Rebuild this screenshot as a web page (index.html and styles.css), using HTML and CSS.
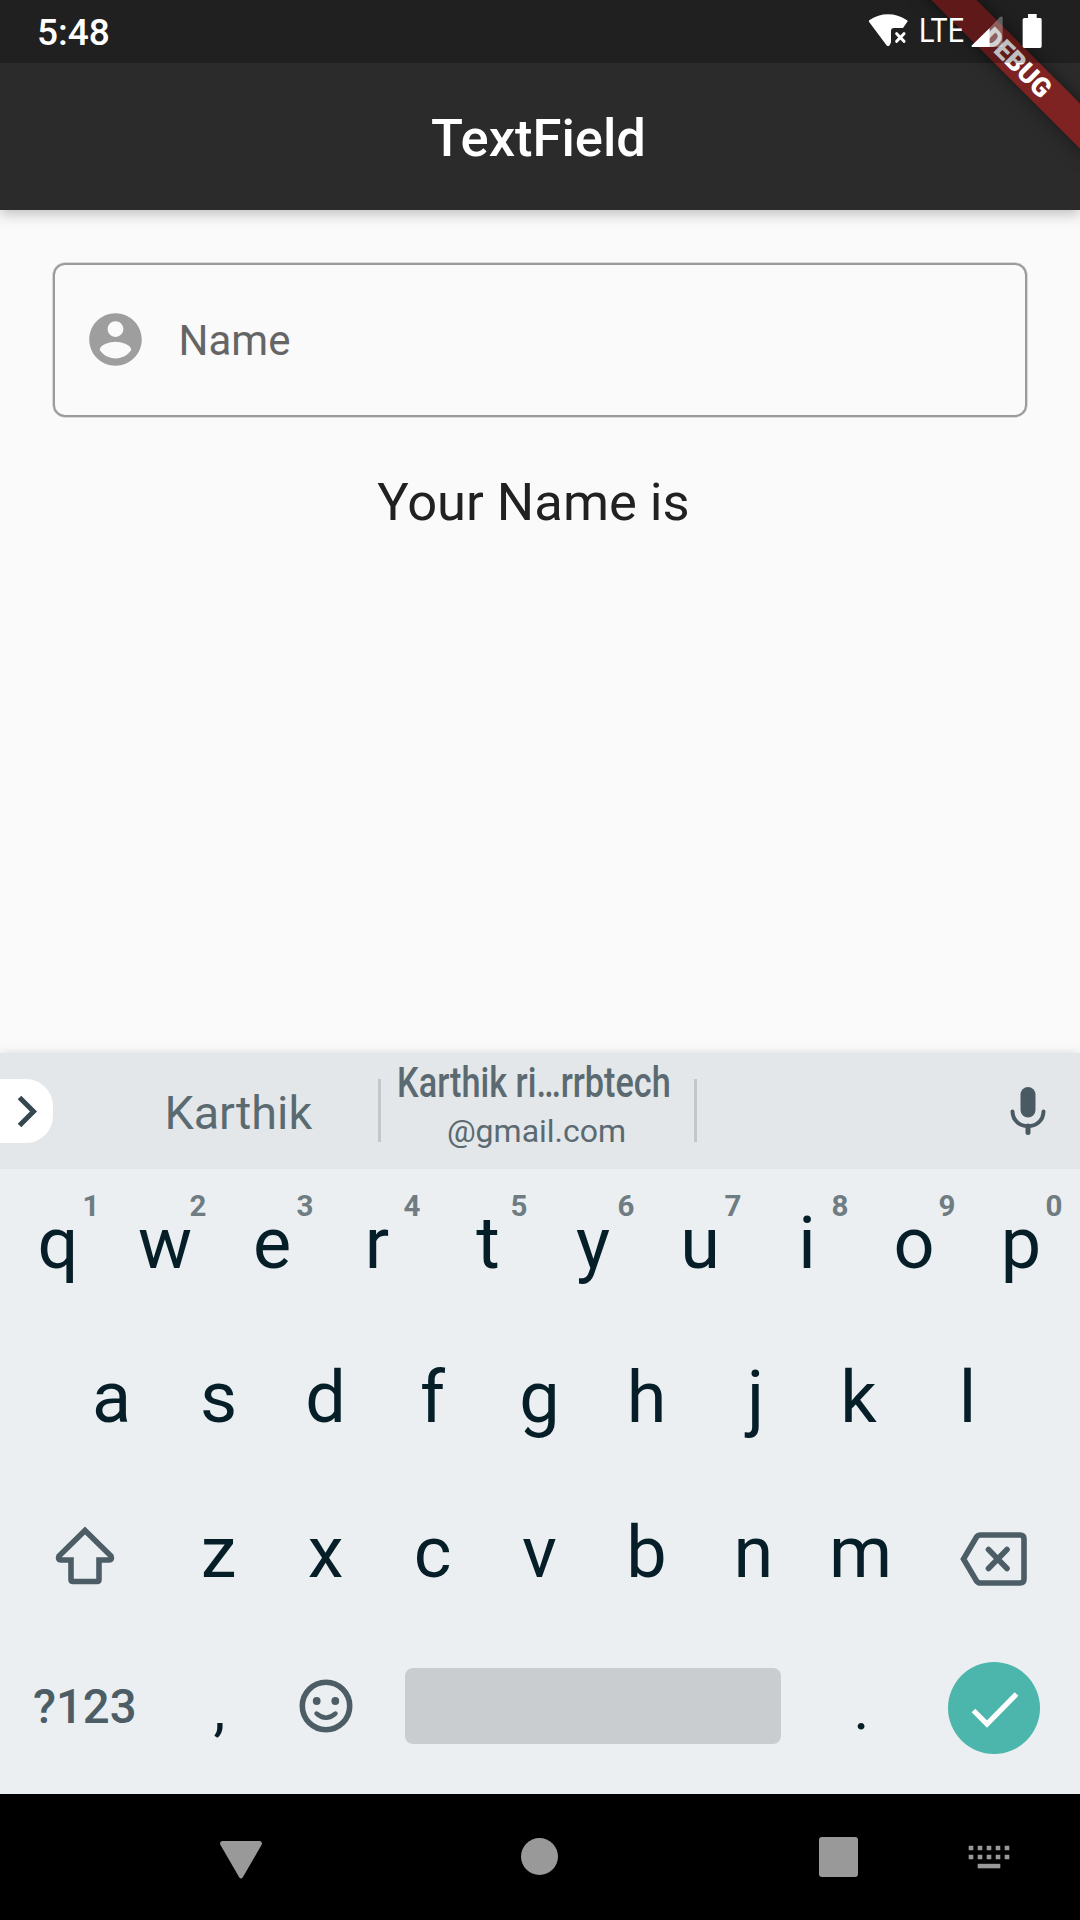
FILE: index.html
```html
<!DOCTYPE html>
<html lang="en">
<head>
<meta charset="utf-8">
<title>TextField</title>
<link rel="stylesheet" href="styles.css">
</head>
<body>
<div class="screen">
  <header class="appbar">
    <div class="debug-banner">DEBUG</div>
    <div class="statusbar">
      <span class="clock">5:48</span>
      <div class="indicators">
        <svg class="wifi" width="40" height="34" viewBox="0 0 120 102" fill="#fff"><path d="M4 31Q1 27 5 24Q30 7 60 7Q90 7 116 24Q121 27 117 31L105 48H78Q69 48 69 58V91L65 100Q60 105 55 99Z"/><path d="M86 65l22 23M108 65L86 88" fill="none" stroke="#fff" stroke-width="9" stroke-linecap="round"/></svg>
        <span class="lte">LTE</span>
        <svg class="signal" width="32" height="32" viewBox="0 0 96 96" fill="#fff"><path d="M56 36V93H5Q-1 92 3 88Z"/><path opacity=".3" d="M56 36L86 4Q93-1 95 5V93H56Z"/></svg>
        <svg class="battery" width="20" height="34" viewBox="0 0 60 102" fill="#fff"><path d="M18 0H44V12H55Q59 12 59 17V97Q59 102 54 102H7Q2 102 2 97V17Q2 12 7 12H18Z"/></svg>
      </div>
    </div>
    <h1 class="title">TextField</h1>
  </header>

  <main class="content">
    <label class="field">
      <svg class="avatar" width="63" height="63" viewBox="0 0 24 24"><path fill="#9e9e9e" d="M12 2C6.48 2 2 6.48 2 12s4.48 10 10 10 10-4.48 10-10S17.52 2 12 2zm0 3c1.66 0 3 1.34 3 3s-1.34 3-3 3-3-1.34-3-3 1.34-3 3-3zm0 14.2c-2.5 0-4.71-1.28-6-3.22.03-1.99 4-3.08 6-3.08 1.99 0 5.97 1.09 6 3.08-1.29 1.94-3.5 3.22-6 3.22z"/></svg>
      <span class="hint">Name</span>
    </label>
    <p class="result">Your Name is </p>
  </main>

  <section class="keyboard">
    <div class="suggestions">
      <div class="expand"><svg width="52" height="64" viewBox="0 0 52 64"><path d="M19.5 18.500L33.500 32.500L19.500 46.500" fill="none" stroke="#37474f" stroke-width="5"/></svg></div>
      <div class="suggestion first">Karthik</div>
      <div class="divider"></div>
      <div class="suggestion email"><b class="account">Karthik ri…rrbtech</b><span class="domain">@gmail.com</span></div>
      <div class="divider"></div>
      <svg class="mic" width="36" height="48" viewBox="0 0 36 48"><rect x="10.500" y="0" width="15" height="30.500" rx="7.500" fill="#4a5a62"/><path d="M2.500 24.500C3 44 33 44 33.500 24.500" fill="none" stroke="#4a5a62" stroke-width="4" stroke-linecap="round"/><path d="M18 39V45.500" stroke="#4a5a62" stroke-width="5" stroke-linecap="round"/></svg>
    </div>
    <div class="keys">
      <div class="row">
        <div class="key">q<sup class="alt">1</sup></div><div class="key">w<sup class="alt">2</sup></div><div class="key">e<sup class="alt">3</sup></div><div class="key lean-left">r<sup class="alt">4</sup></div><div class="key lean-right">t<sup class="alt">5</sup></div><div class="key">y<sup class="alt">6</sup></div><div class="key">u<sup class="alt">7</sup></div><div class="key">i<sup class="alt">8</sup></div><div class="key">o<sup class="alt">9</sup></div><div class="key">p<sup class="alt">0</sup></div>
      </div>
      <div class="row">
        <div class="key">a</div><div class="key">s</div><div class="key">d</div><div class="key">f</div><div class="key">g</div><div class="key">h</div><div class="key lean-right">j</div><div class="key lean-left">k</div><div class="key">l</div>
      </div>
      <div class="row">
        <div class="key wide shift"><svg width="60" height="60" viewBox="0 0 60 60" fill="none" stroke="#4d5d66" stroke-width="5.600"><path d="M30 5.500L56 31Q57.500 35 54 35H44V54.500Q44 56.500 42 56.500H18Q16 56.500 16 54.500V35H6Q2.500 35 4 31Z"/></svg></div>
        <div class="key">z</div><div class="key">x</div><div class="key">c</div><div class="key">v</div><div class="key">b</div><div class="key">n</div><div class="key">m</div>
        <div class="key wide backspace"><svg width="68" height="56" viewBox="0 0 68 56" fill="none" stroke="#4d5d66" stroke-width="5.600"><path d="M20.500 4H60Q64 4 64 8V48Q64 52 60 52H20.500Q18 52 16.500 50L3.500 28L16.500 6Q18 4 20.500 4Z"/><path d="M28.500 18.500L47 37.500M47 18.500L28.500 37.500" stroke-linecap="round"/></svg></div>
      </div>
      <div class="row">
        <div class="key wide symbols">?123</div>
        <div class="key punct">,</div>
        <div class="key emoji"><svg width="54" height="54" viewBox="0 0 54 54"><circle cx="27" cy="27" r="23.700" fill="none" stroke="#4d5d66" stroke-width="5.600"/><circle cx="17.700" cy="22" r="3.900" fill="#4d5d66"/><circle cx="36.300" cy="22" r="3.900" fill="#4d5d66"/><path d="M17.500 34.500Q27 43 36.500 34.500" fill="none" stroke="#4d5d66" stroke-width="4.400" stroke-linecap="round"/></svg></div>
        <div class="key space"><span class="spacebar"></span></div>
        <div class="key punct">.</div>
        <div class="key wide enter"><span class="done"><svg width="92" height="92" viewBox="0 0 92 92"><path d="M25.500 48.500L39 62L68.500 32" fill="none" stroke="#fff" stroke-width="5.200"/></svg></span></div>
      </div>
    </div>
  </section>

  <nav class="navbar">
    <svg class="back" width="42" height="38" viewBox="0 0 42 38"><path fill="#999" d="M2 0H40Q43 1 41.500 4L23 36Q21 39 19 36L.5 4Q-1 1 2 0Z"/></svg>
    <span class="home"></span>
    <span class="recent"></span>
    <svg class="ime" width="42" height="24" viewBox="0 0 42 24"><path stroke="#999" stroke-width="4.500" stroke-dasharray="4.600 4.400" d="M.7 3H42M.7 12H42"/><path fill="#999" d="M9.700 18.800h22.600v4.500H9.700z"/></svg>
  </nav>
</div>
</body>
</html>
```
FILE: styles.css
```css
* { box-sizing: border-box; }

body {
  margin: 0;
  background: #fafafa;
  font-family: Roboto, "Liberation Sans", sans-serif;
}

.screen {
  display: flex;
  flex-direction: column;
  width: 1080px;
  height: 1920px;
  overflow: hidden;
  background: #fafafa;
}

/* App bar */
.appbar {
  position: relative;
  display: flex;
  flex-direction: column;
  flex: none;
  height: 210px;
  background: #2b2b2b;
  box-shadow: 0 4px 13px rgba(0, 0, 0, .24);
  color: #fff;
  clip-path: inset(0 0 -40px 0);
}

.statusbar {
  position: relative;
  display: flex;
  justify-content: space-between;
  height: 63px;
  padding: 0 38px 0 37px;
  background: rgba(0, 0, 0, .25);
}

.clock {
  font-size: 37px;
  font-weight: 500;
  line-height: 66px;
}

.indicators {
  display: flex;
  align-items: flex-start;
}

.wifi { margin-top: 12px; }

.lte {
  width: 44px;
  margin-left: 11px;
  font-size: 33px;
  line-height: 62px;
  transform: scaleX(.87);
  transform-origin: 0 50%;
}

.signal { margin: 16px 0 0 8px; }

.battery { margin: 14px 0 0 19px; }

.title {
  margin: 0;
  padding-right: 3px;
  font-size: 52.500px;
  font-weight: 500;
  line-height: 150px;
  text-align: center;
}

.debug-banner {
  position: absolute;
  top: 47px;
  left: 897px;
  width: 240px;
  height: 31.500px;
  background: rgba(183, 28, 28, .6);
  box-shadow: 0 0 16px rgba(0, 0, 0, .5);
  font-size: 26.800px;
  font-weight: 900;
  line-height: 32px;
  text-align: center;
  transform: rotate(45deg);
}

/* Form */
.content {
  flex: 1;
  padding: 53px 53px 0;
}

.field {
  display: flex;
  align-items: center;
  gap: 31.500px;
  height: 154px;
  padding: 0 0 1px 29px;
  border: 2px solid #9b9b9b;
  border-radius: 12px;
  box-shadow: 0 0 0 .5px #b8b8b8;
}

.hint {
  padding-top: 2px;
  color: #656565;
  font-size: 42px;
}

.result {
  margin: 54px 0 0;
  color: #212121;
  font-size: 52.500px;
  line-height: 62px;
  text-align: center;
  white-space: pre;
}

/* Keyboard */
.keyboard {
  flex: none;
  height: 741px;
  background: #ebeff2;
  box-shadow: 0 0 9px rgba(0, 0, 0, .13);
}

.suggestions {
  display: flex;
  align-items: center;
  height: 116px;
  background: #e3e7ea;
  color: #5b6a71;
}

.expand {
  width: 52.500px;
  height: 64px;
  border-radius: 0 27px 27px 0;
  background: #fff;
}

.suggestion { text-align: center; }

.first {
  width: 325.500px;
  padding-top: 3px;
  padding-left: 46px;
  font-size: 46.700px;
}

.divider {
  width: 3px;
  height: 63px;
  margin-bottom: 1px;
  background: #c3c7ca;
}

.email {
  display: flex;
  flex-direction: column;
  align-items: center;
  width: 313px;
  padding: 0 7px 8px 0;
}

.account {
  font-size: 42px;
  font-weight: 500;
  line-height: 48px;
  white-space: nowrap;
  transform: scaleX(.815);
}

.domain {
  padding-left: 5px;
  font-size: 32px;
  line-height: 48px;
}

.mic { margin: 0 0 1px 313px; }

.keys {
  display: flex;
  flex-direction: column;
  gap: 18.500px;
  padding: 6px 1px 0 0;
}

.row {
  display: flex;
  justify-content: center;
}

.key {
  position: relative;
  display: flex;
  flex: none;
  align-items: center;
  justify-content: center;
  width: 107px;
  height: 136px;
  color: #051e28;
  font-size: 72px;
}

.lean-left { padding-right: 4px; }
.lean-right { padding-left: 4px; }

.wide { width: 160.500px; }

.shift { padding: 6px 0 0 1px; }
.backspace { padding: 13px 1px 0 0; }
.emoji { padding-bottom: 2px; }

.alt {
  position: absolute;
  top: 13px;
  right: 12px;
  color: #6f7c82;
  font-size: 29.500px;
  font-weight: 700;
  line-height: 36px;
}

.symbols {
  color: #4d5d66;
  font-size: 47.300px;
  font-weight: 500;
}

.punct {
  padding: 3px 0 0 2px;
  font-size: 60px;
}

.space {
  width: 428px;
  padding-bottom: 1px;
}

.spacebar {
  width: 376px;
  height: 76px;
  border-radius: 8px;
  background: #c9cdd0;
}

.enter { padding: 2px 0 0; }

.done {
  width: 92px;
  height: 92px;
  border-radius: 50%;
  background: #4db6ac;
}

/* System navigation */
.navbar {
  display: flex;
  align-items: center;
  flex: none;
  height: 126px;
  padding-left: 220px;
  background: #000;
}

.back { margin-top: 5px; }

.home {
  width: 37px;
  height: 37px;
  margin: 0 0 1px 259px;
  border-radius: 50%;
  background: #999;
}

.recent {
  width: 39px;
  height: 40px;
  margin-left: 260.500px;
  border-radius: 3px;
  background: #999;
}

.ime { margin-left: 110.500px; }
```
